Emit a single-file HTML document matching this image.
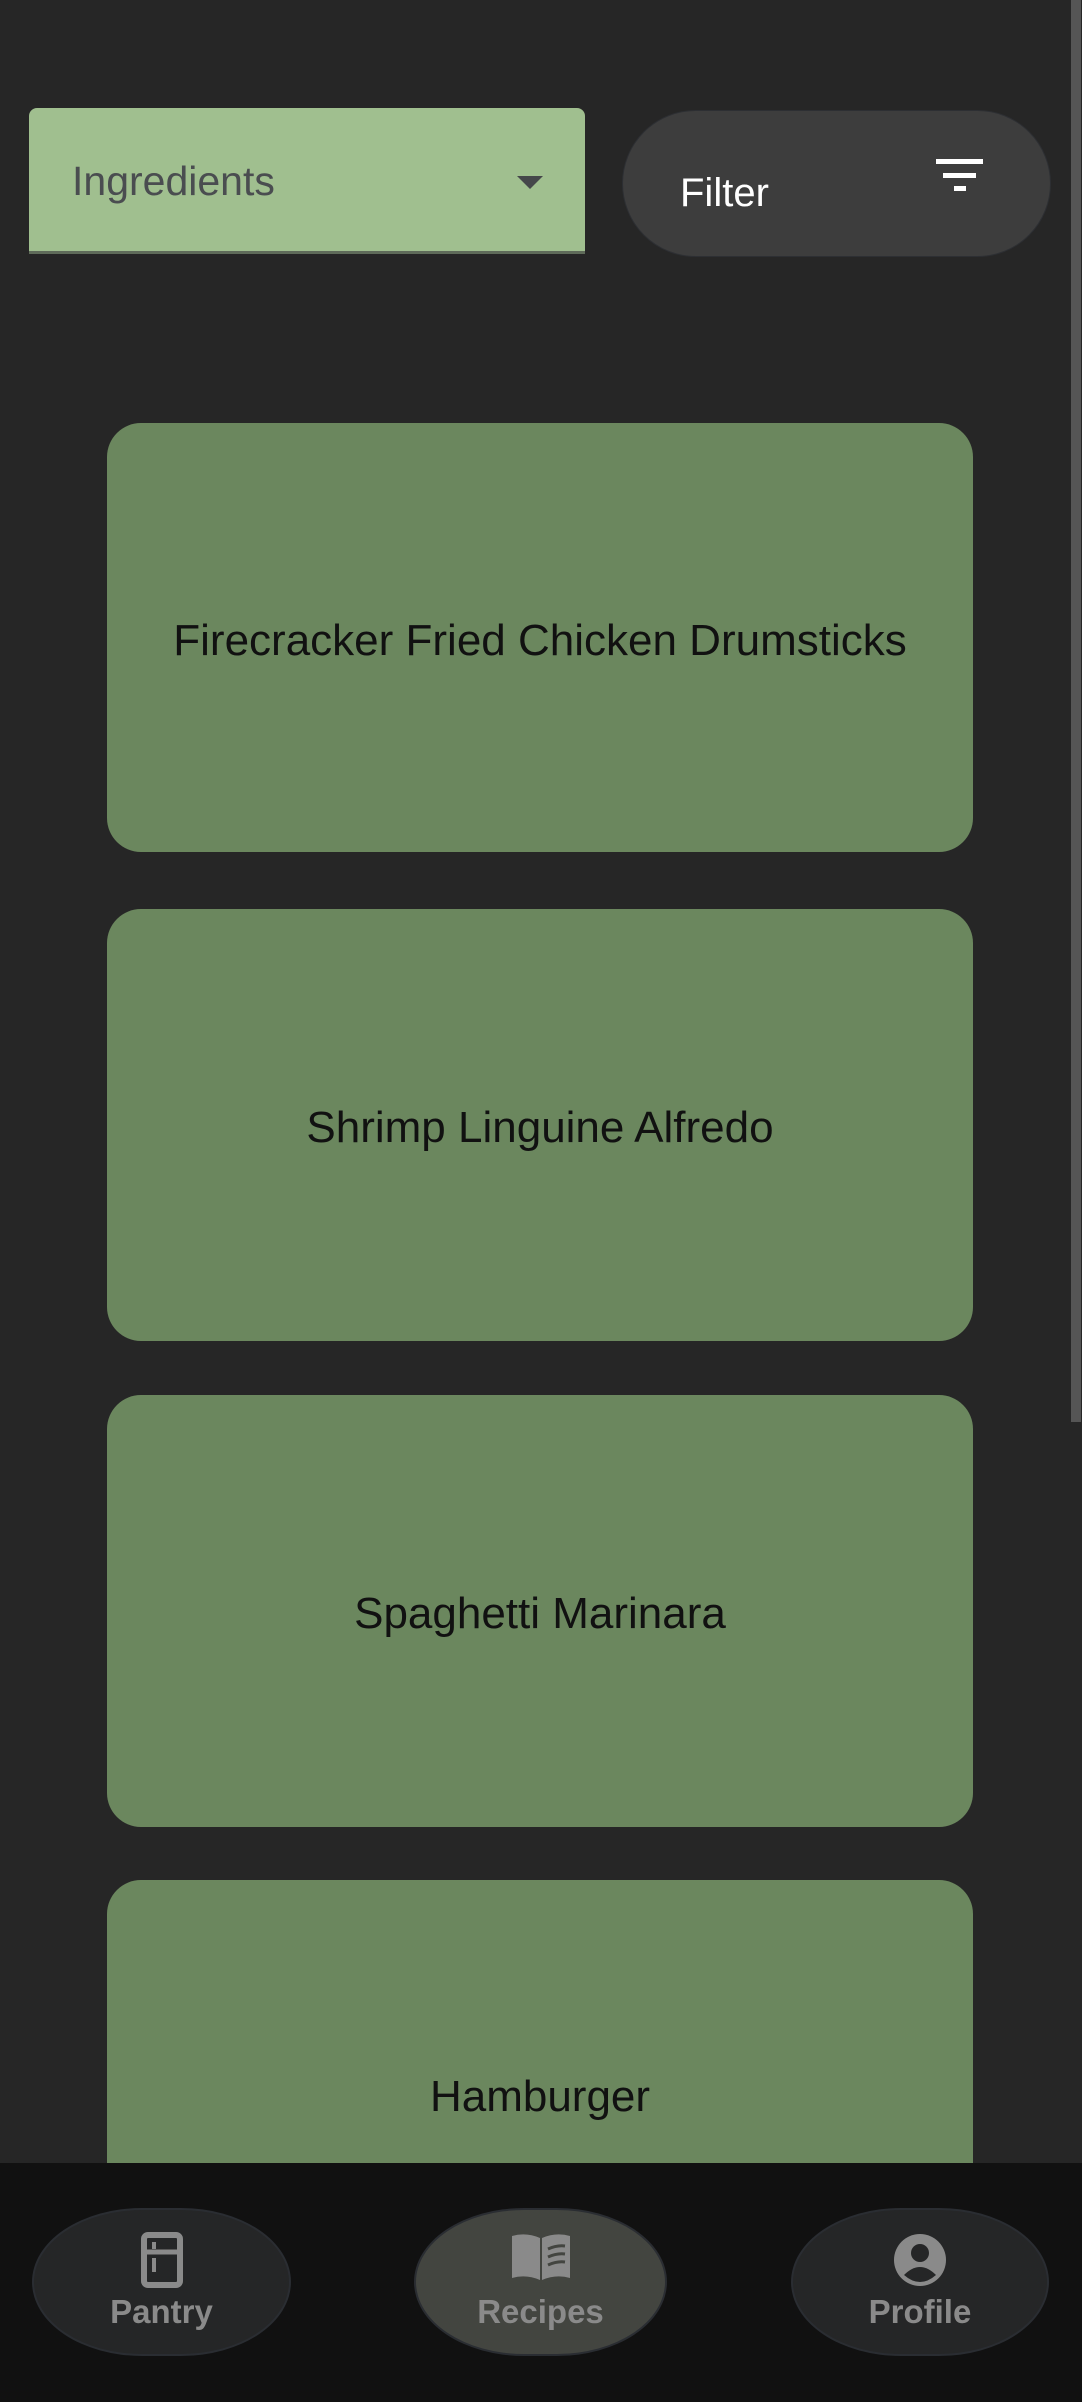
<!DOCTYPE html>
<html><head><style>
*{margin:0;padding:0;box-sizing:border-box}
body{width:1082px;height:2402px;background:#262626;position:relative;overflow:hidden;font-family:"Liberation Sans",sans-serif}
.dd{position:absolute;left:29px;top:108px;width:556px;height:146px;background:#a0bf8f;border-radius:8px 8px 0 0;border-bottom:3px solid #5f6b5a}
.dd span{position:absolute;left:43px;top:50px;font-size:41px;color:#4a4d50}
.dd i{position:absolute;right:42px;top:68px;width:0;height:0;border-left:13px solid transparent;border-right:13px solid transparent;border-top:13px solid #45474a}
.flt{position:absolute;left:622px;top:110px;width:429px;height:147px;background:#3d3d3d;border-radius:74px;border:1px solid #2d2f33}
.flt span{position:absolute;left:57px;top:60px;font-size:40px;color:#fff}
.bar{position:absolute;background:#fff;height:5px}
.sb{position:absolute;left:1071px;top:0;width:10px;height:1422px;background:#555}
.card{position:absolute;left:107px;width:866px;background:#6b875e;border-radius:34px;display:flex;align-items:center;justify-content:center;font-size:44px;color:#111;padding-top:6px}
.nav{position:absolute;left:0;top:2163px;width:1082px;height:239px;background:#111}
.btn{position:absolute;top:2208px;height:148px;background:#252627;border:2px solid #2a2d32;border-radius:110px/74px;color:#8a8a8a;font-weight:bold;font-size:33px;text-align:center}
.btn svg{position:absolute;left:50%;transform:translateX(-50%);top:22px}
.btn b{position:absolute;left:0;right:0;top:83px}
</style></head><body>
<div class="dd"><span>Ingredients</span><i></i></div>
<div class="flt"><span>Filter</span></div>
<div class="bar" style="left:936px;top:159px;width:47px"></div>
<div class="bar" style="left:943px;top:173px;width:33px"></div>
<div class="bar" style="left:954px;top:186px;width:12px"></div>
<div class="sb"></div>
<div class="card" style="top:423px;height:429px">Firecracker Fried Chicken Drumsticks</div>
<div class="card" style="top:909px;height:432px">Shrimp Linguine Alfredo</div>
<div class="card" style="top:1395px;height:432px">Spaghetti Marinara</div>
<div class="card" style="top:1880px;height:432px;align-items:flex-start;padding-top:192px">Hamburger</div>
<div class="nav"></div>
<div class="btn" style="left:32px;width:259px"><svg width="44" height="56" viewBox="0 0 44 56"><rect x="4" y="3" width="36" height="50" rx="4" fill="none" stroke="#8a8a8a" stroke-width="6"/><line x1="4" y1="20" x2="40" y2="20" stroke="#8a8a8a" stroke-width="5"/><rect x="12" y="10" width="4" height="7" fill="#8a8a8a"/><rect x="12" y="26" width="4" height="14" fill="#8a8a8a"/></svg><b>Pantry</b></div>
<div class="btn" style="left:414px;width:253px;background:#434540"><svg width="62" height="50" viewBox="0 0 62 50"><path d="M2 4 Q16 0 30 6 V48 Q16 42 2 46Z" fill="#8a8a8a"/><path d="M32 6 Q46 0 60 4 V46 Q46 42 32 48Z" fill="#8a8a8a"/><path d="M38 17 Q47 13 55 14 M38 25 Q47 21 55 22 M38 33 Q47 29 55 30" stroke="#434540" stroke-width="3" fill="none"/></svg><b>Recipes</b></div>
<div class="btn" style="left:791px;width:258px"><svg width="54" height="56" viewBox="0 0 54 56"><circle cx="27" cy="28" r="26" fill="#8a8a8a"/><circle cx="27" cy="21" r="9" fill="#252627"/><path d="M11 43 Q27 27 43 43 Q27 57 11 43Z" fill="#252627"/></svg><b>Profile</b></div>
</body></html>
